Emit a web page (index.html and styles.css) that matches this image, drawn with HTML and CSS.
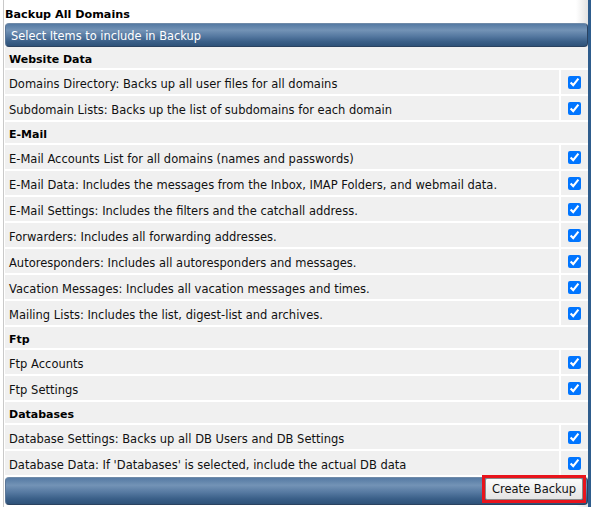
FILE: index.html
```html
<!DOCTYPE html>
<html>
<head>
<meta charset="utf-8">
<link rel="stylesheet" href="styles.css">
</head>
<body>
<div class="page">
  <div class="content">
    <div class="title">Backup All Domains</div>
    <div class="bar bar-top">Select Items to include in Backup</div>
    <div class="table">
      <div class="group">Website Data</div>
      <div class="row"><div class="label">Domains Directory: Backs up all user files for all domains</div><div class="check"><input type="checkbox" checked></div></div>
      <div class="row"><div class="label">Subdomain Lists: Backs up the list of subdomains for each domain</div><div class="check"><input type="checkbox" checked></div></div>
      <div class="group">E-Mail</div>
      <div class="row"><div class="label">E-Mail Accounts List for all domains (names and passwords)</div><div class="check"><input type="checkbox" checked></div></div>
      <div class="row"><div class="label">E-Mail Data: Includes the messages from the Inbox, IMAP Folders, and webmail data.</div><div class="check"><input type="checkbox" checked></div></div>
      <div class="row"><div class="label">E-Mail Settings: Includes the filters and the catchall address.</div><div class="check"><input type="checkbox" checked></div></div>
      <div class="row"><div class="label">Forwarders: Includes all forwarding addresses.</div><div class="check"><input type="checkbox" checked></div></div>
      <div class="row"><div class="label">Autoresponders: Includes all autoresponders and messages.</div><div class="check"><input type="checkbox" checked></div></div>
      <div class="row"><div class="label">Vacation Messages: Includes all vacation messages and times.</div><div class="check"><input type="checkbox" checked></div></div>
      <div class="row"><div class="label">Mailing Lists: Includes the list, digest-list and archives.</div><div class="check"><input type="checkbox" checked></div></div>
      <div class="group">Ftp</div>
      <div class="row"><div class="label">Ftp Accounts</div><div class="check"><input type="checkbox" checked></div></div>
      <div class="row"><div class="label">Ftp Settings</div><div class="check"><input type="checkbox" checked></div></div>
      <div class="group">Databases</div>
      <div class="row"><div class="label">Database Settings: Backs up all DB Users and DB Settings</div><div class="check"><input type="checkbox" checked></div></div>
      <div class="row"><div class="label">Database Data: If 'Databases' is selected, include the actual DB data</div><div class="check"><input type="checkbox" checked></div></div>
    </div>
    <div class="bar bar-bottom">
      <div class="highlight"><button class="btn">Create Backup</button></div>
    </div>
  </div>
</div>
</body>
</html>
```

FILE: styles.css
```css
html, body {
  margin: 0;
  padding: 0;
  background: #fff;
}
body {
  font-family: "DejaVu Sans", Verdana, sans-serif;
  font-size: 11.5px;
  color: #111;
}
.page {
  margin-left: 3px;
  width: 584px;
  height: 507px;
  border-left: 1px solid #c9c9c9;
  border-right: 3px solid #2e5c8c;
  overflow: hidden;
  background: linear-gradient(to right, #fff 0, #fff 572px, #e2e2e2 584px);
}
.content {
  padding-left: 1px;
}
.title {
  height: 23px;
  box-sizing: border-box;
  padding-top: 8px;
  font-weight: bold;
  font-size: 11.2px;
  color: #000;
}
.bar {
  box-sizing: border-box;
  border-radius: 4px;
  border: 1px solid #2a4260;
  border-top-color: #6f8aa8;
  border-left-color: #5b7697;
  background: linear-gradient(#557aa3 0%, #7393b6 28%, #5679a1 55%, #3a5f88 80%, #2e5279 100%);
  color: #fff;
}
.bar-top {
  height: 24px;
  padding: 5px 0 0 5px;
  font-size: 11.4px;
}
.table {
  display: flex;
  flex-direction: column;
}
.group {
  height: 23px;
  box-sizing: border-box;
  padding: 6px 0 0 4px;
  font-weight: bold;
  font-size: 11px;
  color: #000;
  background: #f0f0f0;
  border-bottom: 2px solid #fff;
}
.row {
  display: flex;
  height: 26px;
  box-sizing: border-box;
  border-bottom: 2px solid #fff;
  background: #f0f0f0;
}
.label {
  flex: 1;
  padding: 7px 0 0 4px;
  white-space: nowrap;
  border-right: 2px solid #fff;
}
.check {
  width: 27px;
  display: flex;
  align-items: center;
  justify-content: center;
}
.check input {
  margin: 0;
  width: 13px;
  height: 13px;
}
.bar-bottom {
  height: 28px;
  display: flex;
  justify-content: flex-end;
  align-items: flex-start;
  padding-right: 1px;
  overflow: visible;
}
.highlight {
  margin-top: -3px;
  border: 3px solid #e8141c;
  padding: 0;
  display: flex;
}
.btn {
  font-family: "DejaVu Sans", Verdana, sans-serif;
  font-size: 11.5px;
  color: #111;
  height: 22px;
  padding: 0 6px 0 6px;
  border: 1px solid #8a8a8a;
  border-radius: 2px;
  background: linear-gradient(#fbfbfb, #e4e4e4);
}
```
